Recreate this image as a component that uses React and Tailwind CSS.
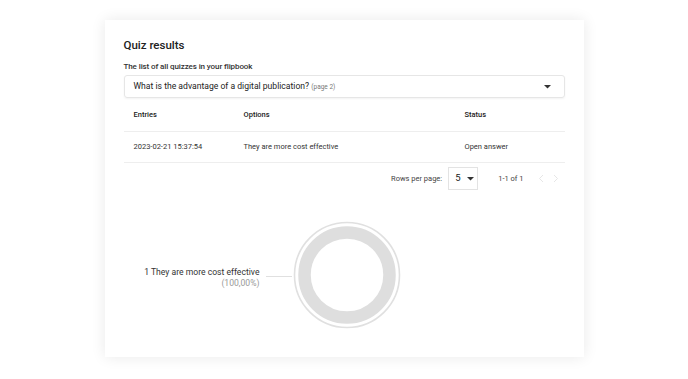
import React from 'react';

const rows = [
    { entry: '2023-02-21 15:37:54', option: 'They are more cost effective', status: 'Open answer' },
];

const Caret = ({ className }) => (
    <svg width="7" height="4" viewBox="0 0 7 4" className={className}>
        <path d="M0 0h7L3.5 3.5z" fill="#333" />
    </svg>
);

const App = () => {
    return (
        <div className="w-[688px] h-[379px] bg-white pt-[20px] font-['Roboto',sans-serif] text-[#333]">
            <div className="w-[479px] h-[337px] mx-auto bg-white shadow-[0_0_14px_rgba(0,0,0,0.09)] px-[19px] pt-[16px]">
                <h1 className="text-[11.5px] leading-[18px] font-medium text-[#222]">Quiz results</h1>
                <p className="mt-[8px] text-[8px] leading-[10px] font-medium text-[#333] tracking-[-0.1px]">The list of all quizzes in your flipbook</p>

                {/* Quiz picker */}
                <div className="mt-[3px] h-[23px] flex items-center justify-between pl-[9px] pr-[13px] border border-[#e6e6e6] rounded-[3px] shadow-[0_1px_2px_rgba(0,0,0,0.05)]">
                    <span className="text-[8.6px] text-[#222]">
                        What is the advantage of a digital publication?{' '}
                        <span className="text-[6.5px] text-[#777]">(page 2)</span>
                    </span>
                    <Caret />
                </div>

                {/* Table */}
                <div className="text-[7.5px]">
                    <div className="h-[34px] flex items-center border-b border-[#eeeeee] font-medium text-[#222]">
                        <div className="w-[120px] pl-[10px]">Entries</div>
                        <div className="w-[221px]">Options</div>
                        <div>Status</div>
                    </div>
                    {rows.map((r) => (
                        <div key={r.entry} className="h-[31px] flex items-center border-b border-[#eeeeee]">
                            <div className="w-[120px] pl-[10px]">{r.entry}</div>
                            <div className="w-[221px]">{r.option}</div>
                            <div>{r.status}</div>
                        </div>
                    ))}
                    <div className="h-[31px] flex items-center justify-end">
                        <span className="text-[#444]">Rows per page:</span>
                        <div className="ml-[6px] w-[30px] h-[23px] border border-[#e3e3e3] flex items-center pl-[6px] gap-[6px]">
                            <span className="text-[9.5px] text-[#222]">5</span>
                            <Caret />
                        </div>
                        <span className="ml-[20px] text-[#444]">1-1 of 1</span>
                        <div className="ml-[14px] mr-[6px] flex items-center gap-[9px]">
                            <svg width="6" height="9" viewBox="0 0 6 9"><path d="M5 1L1.5 4.5 5 8" stroke="#e6e6e6" strokeWidth="1" fill="none" /></svg>
                            <svg width="6" height="9" viewBox="0 0 6 9"><path d="M1 1l3.5 3.5L1 8" stroke="#e6e6e6" strokeWidth="1" fill="none" /></svg>
                        </div>
                    </div>
                </div>

                {/* Chart */}
                <div className="mt-[27px] flex items-start">
                    <div className="w-[136px] mt-[46px] text-right text-[8.6px] leading-[11px]">
                        <div className="text-[#333]">1 They are more cost effective</div>
                        <div className="text-[#999]">(100,00%)</div>
                    </div>
                    <div className="ml-[6px] mt-[55px] w-[26px] h-px bg-[#e0e0e0]"></div>
                    <div className="w-px"></div>
                    <svg width="108" height="108" viewBox="0 0 108 108">
                        <circle cx="54" cy="54" r="52.5" fill="none" stroke="#e0e0e0" strokeWidth="1.6" />
                        <circle cx="54" cy="54" r="42.5" fill="none" stroke="#dedede" strokeWidth="12.5" />
                    </svg>
                </div>
            </div>
        </div>
    );
};

export default App;
